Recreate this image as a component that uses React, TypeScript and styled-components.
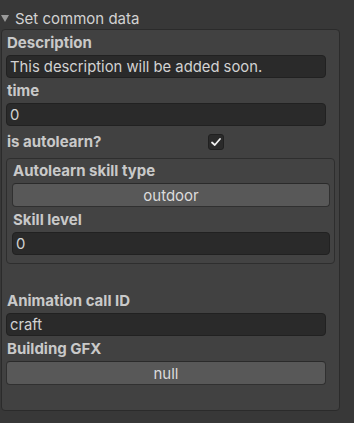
import styled, { createGlobalStyle } from 'styled-components';

const GlobalStyle = createGlobalStyle`
  html, body {
    margin: 0;
    padding: 0;
    background: #383838;
  }
  body {
    font-family: Inter, 'Noto Sans', sans-serif;
    font-size: 15px;
    color: #d2d2d2;
    width: 354px;
    height: 423px;
    overflow: hidden;
  }
`;

const Inspector = styled.div`
  padding: 8px 14px 0 1px;
`;

const Foldout = styled.div`
  display: flex;
  align-items: center;
  gap: 6px;
  height: 20px;
  color: #d2d2d2;
`;

const Arrow = styled.span`
  width: 0;
  height: 0;
  border-left: 4px solid transparent;
  border-right: 4px solid transparent;
  border-top: 7px solid #9a9a9a;
  margin-top: 1px;
`;

const Box = styled.div<{ $nested?: boolean }>`
  display: flex;
  flex-direction: column;
  margin-top: 1px;
  background: ${(p) => (p.$nested ? '#434343' : '#414141')};
  border: 1px solid ${(p) => (p.$nested ? '#2e2e2e' : '#2b2b2b')};
  border-radius: 4px;
  padding: ${(p) => (p.$nested ? '2px 4px 7px 5px' : '3px 4px 22px 4px')};
  height: ${(p) => (p.$nested ? '106px' : 'auto')};
  box-sizing: border-box;
`;

const Label = styled.div`
  font-weight: 700;
  line-height: 20px;
  height: 20px;
  padding-left: 1px;
  color: #c9c9c9;
`;

const Control = styled.div<{ $inset?: boolean }>`
  margin: 2px ${(p) => (p.$inset ? '0' : '9px')} 3px 0;
  height: 23px;
  box-sizing: border-box;
  border-radius: 4px;
  display: flex;
  align-items: center;
  flex-shrink: 0;
`;

const TextField = styled(Control)`
  background: #2a2a2a;
  border: 1px solid #212121;
  padding-left: 3px;
  color: #d2d2d2;
  font-size: 14.8px;
`;

const Popup = styled(Control)`
  background: #585858;
  border: 1px solid #303030;
  border-top-color: #2a2a2a;
  justify-content: center;
  color: #dcdcdc;
  height: 24px;
`;

const ToggleRow = styled.div`
  display: flex;
  align-items: center;
  height: 24px;
  margin: 1px 0 3px;
`;

const ToggleLabel = styled(Label)`
  width: 201px;
`;

const Checkbox = styled.div`
  width: 16px;
  height: 16px;
  box-sizing: border-box;
  background: #2a2a2a;
  border: 1px solid #202020;
  border-radius: 3px;
  display: flex;
  align-items: center;
  justify-content: center;
`;

const Spacer = styled.div`
  height: 27px;
  flex-shrink: 0;
`;

export default function App() {
  return (
    <>
      <GlobalStyle />
      <Inspector>
        <Foldout>
          <Arrow />
          Set common data
        </Foldout>
        <Box>
          <Label>Description</Label>
          <TextField>This description will be added soon.</TextField>
          <Label>time</Label>
          <TextField>0</TextField>
          <ToggleRow>
            <ToggleLabel>is autolearn?</ToggleLabel>
            <Checkbox>
              <svg width="12" height="12" viewBox="0 0 12 12">
                <path d="M2 6.5 L4.8 9 L10 3" fill="none" stroke="#f0f0f0" strokeWidth="1.8" strokeLinecap="round" strokeLinejoin="round" />
              </svg>
            </Checkbox>
          </ToggleRow>
          <Box $nested>
            <Label>Autolearn skill type</Label>
            <Popup $inset>outdoor</Popup>
            <Label>Skill level</Label>
            <TextField $inset>0</TextField>
          </Box>
          <Spacer />
          <Label>Animation call ID</Label>
          <TextField>craft</TextField>
          <Label>Building GFX</Label>
          <Popup>null</Popup>
        </Box>
      </Inspector>
    </>
  );
}
